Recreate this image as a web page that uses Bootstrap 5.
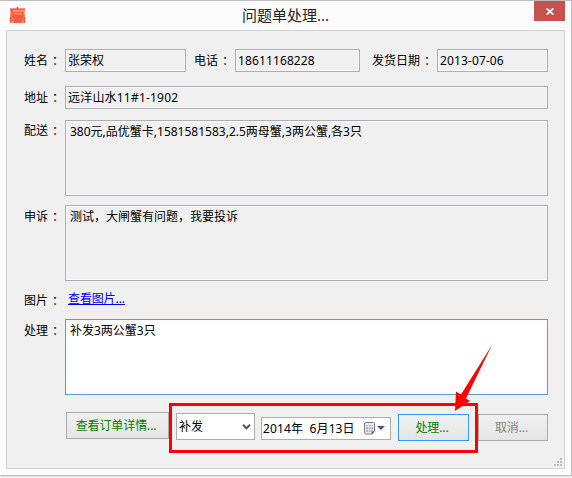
<!DOCTYPE html>
<html lang="zh-CN">
<head>
<meta charset="utf-8">
<meta name="viewport" content="width=device-width, initial-scale=1">
<title>问题单处理...</title>
<link href="https://cdn.jsdelivr.net/npm/bootstrap@5.3.0/dist/css/bootstrap.min.css" rel="stylesheet">
<style>
body{font:12px/16px "Noto Sans","Noto Sans CJK SC",sans-serif;color:#000;background:#fff;width:572px;height:478px;overflow:hidden}
.window{width:572px;height:476px;background:#fcfcfc;border:solid #bdbdbd;border-width:1px 1px 1px 0;box-shadow:0 1px 2px #ddd}
.titlebar{height:29px}
.app-logo{width:17px;height:17px;margin:6px 0 0 9px}
.caption{font-size:15px;line-height:20px;color:#222;padding-top:4px}
.close-btn{width:31px;height:20px;background:#c75050;right:6px;top:0;border-radius:0}
.panel{width:559px;height:439px;margin-left:6px;padding:18px 16px 0 17px;background:#f0f0f0;border:1px solid #d2d2d2}
.lbl{width:41px;flex:none;line-height:16px;white-space:nowrap}
.lbl::after{content:"：";margin-left:4px;margin-right:-4px}
.lbl-wide{width:65px;margin-left:12px}
.one{padding-top:4px}
.multi{padding-top:4px}
.row-address{margin-top:14px}
.row-address .field{letter-spacing:.2px}
.row-delivery{margin-top:11px}
.row-delivery .multi{padding-top:3px}
.row-appeal{margin-top:9px}
.row-picture{margin-top:10px;height:28px}
.row-picture .lbl{padding-top:2px}
.field{height:23px;border:1px solid #abadb3;box-shadow:inset 0 0 0 1px #fafafa;padding:3px 2px;white-space:nowrap}
.digits{letter-spacing:.12px}
.area{height:76px;padding:3px 4px}
.area-active{border-color:#569de5;background:#fff}
.w-name{width:121px}.w-phone{width:125px}.w-date{width:111px}
.link{color:#00f;margin-left:3px;letter-spacing:-.1px}
.pushbtn{height:27px;border:1px solid #acacac;border-radius:0;background:linear-gradient(#f0f0f0,#e5e5e5);color:#008000;font-size:12px;line-height:16px;padding:0 3px 0 0;letter-spacing:-.1px}
.pushbtn-detail{width:103px;margin-top:9px}
.pushbtn-default{width:71px;border-color:#3399ff;margin-top:8px}
.pushbtn-off{width:70px;color:#838383;margin-top:11px}
.actions{padding-left:42px}
.hilite{width:309px;height:50px;border:3px solid #f00;padding:0 6px 0 4px}
.combo{width:79px;height:27px;background:#fff;border:1px solid #abadb3;padding:0 3px 0 2px;margin-top:7px}
.picker{width:130px;height:23px;background:#fff;border:1px solid #abadb3;padding:0 5px 0 1px;margin:11px 7px 0 6px;white-space:pre;letter-spacing:.12px}
.arrow{left:0;top:0;pointer-events:none}
</style>
<script src="https://cdn.jsdelivr.net/npm/bootstrap@5.3.0/dist/js/bootstrap.bundle.min.js"></script>
</head>
<body>
<div class="window position-relative">
  <header class="titlebar position-relative d-flex">
    <svg class="app-logo" viewBox="0 0 17 17"><path d="M1 1h15v9.500H1zM1 10h15v6H1z" fill="#f9a393"/><path d="M8.500 0v2M1 2.500h15M3 3v2.500h12M1.500 8h14M3.500 6.500v3h10v-3M1 10.500h4.500v5.500M1.500 10.500v5M1.500 13h4M7 15v-4.500h3.500v4M8.700 11v3l-2 2M9 14l2 2M12 16v-5.500h3.500v5.500M12 13h3.500" fill="none" stroke="#f45b3d" stroke-width="1.700"/></svg>
    <div class="caption text-center position-absolute w-100">问题单处理...</div>
    <button class="close-btn btn p-0 border-0 position-absolute d-flex align-items-center justify-content-center" aria-label="关闭"><svg width="8" height="7" viewBox="0 0 8 7" stroke="#fff" stroke-width="1.7"><path d="M.7.3l6.600 6.400M7.300.3L.7 6.700"/></svg></button>
  </header>
  <main class="panel position-relative">
    <div class="d-flex">
      <label class="lbl one">姓名</label><div class="field w-name">张荣权</div>
      <label class="lbl one ms-2">电话</label><div class="field digits w-phone">18611168228</div>
      <label class="lbl lbl-wide one">发货日期</label><div class="field digits w-date">2013-07-06</div>
    </div>
    <div class="row-address d-flex">
      <label class="lbl one">地址</label><div class="field flex-fill">远洋山水11#1-1902</div>
    </div>
    <div class="row-delivery d-flex">
      <label class="lbl multi">配送</label><div class="field area flex-fill">380元,品优蟹卡,1581581583,2.5两母蟹,3两公蟹,各3只</div>
    </div>
    <div class="row-appeal d-flex">
      <label class="lbl multi">申诉</label><div class="field area flex-fill">测试，大闸蟹有问题，我要投诉</div>
    </div>
    <div class="row-picture d-flex">
      <label class="lbl">图片</label><a href="#" class="link">查看图片...</a>
    </div>
    <div class="d-flex">
      <label class="lbl multi">处理</label><div class="field area area-active flex-fill">补发3两公蟹3只</div>
    </div>
    <div class="actions d-flex align-items-start mt-2">
      <button class="pushbtn pushbtn-detail">查看订单详情...</button>
      <div class="hilite d-flex align-items-start flex-shrink-0">
        <div class="combo d-flex align-items-center justify-content-between"><span>补发</span><svg width="9" height="6" viewBox="0 0 9 6" fill="none" stroke="#555" stroke-width="2"><path d="M1 .8l3.500 3.500L8 .8"/></svg></div>
        <div class="picker d-flex align-items-center"><span>2014年  6月13日</span><svg class="ms-auto" width="21" height="13" viewBox="0 0 21 13"><path d="M2 .5h7.500q1 0 1 1V9L8 12H2q-1.500 0-1.500-1.500V2Q.5.5 2 .5z" fill="#f1efed" stroke="#7d7472"/><path d="M2 3h7v7H2z" fill="#b4bac6"/><path d="M2 4.500h7M2 7.500h7M4.500 3v7M7 3v7" stroke="#eceef2" stroke-width=".7"/><path d="M7.500 12V9.500H11z" fill="#6b605c"/><path d="M13 4h8l-4 4z" fill="#42598c"/></svg></div>
        <button class="pushbtn pushbtn-default">处理...</button>
      </div>
      <button class="pushbtn pushbtn-off flex-shrink-0">取消...</button>
    </div>
    <svg class="position-absolute end-0 bottom-0 me-0" width="11" height="11" fill="#bcbcbc"><path d="M7 1h2v2H7zM7 4h2v2H7zM7 7h2v2H7zM4 4h2v2H4zM4 7h2v2H4zM1 7h2v2H1z"/></svg>
  </main>
  <svg class="arrow position-absolute" width="571" height="474" viewBox="0 1 571 474"><path d="M492 345L461 394.500L456 391.500L455 411L470 401L466 398.500z" fill="#f00"/></svg>
</div>
</body>
</html>
